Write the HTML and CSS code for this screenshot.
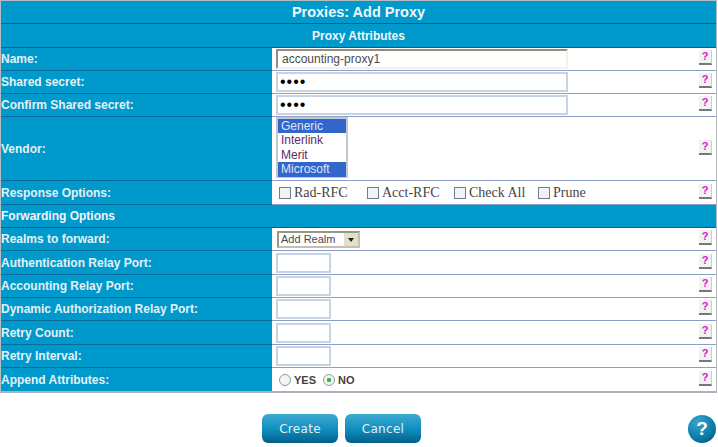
FILE: index.html
```html
<!DOCTYPE html>
<html lang="en">
<head>
  <meta charset="UTF-8">
  <title>Proxies: Add Proxy</title>
  <link rel="stylesheet" href="styles.css">
</head>
<body>
  <form class="proxy-form">
    <table class="proxy-table">
      <colgroup>
        <col class="col-label">
        <col>
        <col class="col-help">
      </colgroup>
      <tr><th colspan="3" class="title">Proxies: Add Proxy</th></tr>
      <tr class="tall"><th colspan="3" class="subtitle">Proxy Attributes</th></tr>
      <tr>
        <td class="label">Name:</td>
        <td class="field"><input type="text" class="text-wide text-focus" value="accounting-proxy1"></td>
        <td class="help"><span class="help-icon">?</span></td>
      </tr>
      <tr>
        <td class="label">Shared secret:</td>
        <td class="field"><input type="password" class="text-wide" value="abcd"></td>
        <td class="help"><span class="help-icon">?</span></td>
      </tr>
      <tr>
        <td class="label">Confirm Shared secret:</td>
        <td class="field"><input type="password" class="text-wide" value="abcd"></td>
        <td class="help"><span class="help-icon">?</span></td>
      </tr>
      <tr class="row-vendor">
        <td class="label">Vendor:</td>
        <td class="field">
          <div class="listbox">
            <div class="opt selected">Generic</div>
            <div class="opt">Interlink</div>
            <div class="opt">Merit</div>
            <div class="opt selected">Microsoft</div>
          </div>
        </td>
        <td class="help"><span class="help-icon">?</span></td>
      </tr>
      <tr class="tall">
        <td class="label">Response Options:</td>
        <td class="field">
          <div class="checks">
            <label class="check check-rad"><span class="box"></span>Rad-RFC</label>
            <label class="check check-acct"><span class="box"></span>Acct-RFC</label>
            <label class="check check-all"><span class="box"></span>Check All</label>
            <label class="check"><span class="box"></span>Prune</label>
          </div>
        </td>
        <td class="help"><span class="help-icon">?</span></td>
      </tr>
      <tr><th colspan="3" class="section">Forwarding Options</th></tr>
      <tr>
        <td class="label">Realms to forward:</td>
        <td class="field">
          <div class="dropdown"><span class="dropdown-text">Add Realm</span><span class="dropdown-btn"></span></div>
        </td>
        <td class="help"><span class="help-icon">?</span></td>
      </tr>
      <tr class="tall">
        <td class="label">Authentication Relay Port:</td>
        <td class="field"><input type="text" class="text-short"></td>
        <td class="help"><span class="help-icon">?</span></td>
      </tr>
      <tr>
        <td class="label">Accounting Relay Port:</td>
        <td class="field"><input type="text" class="text-short"></td>
        <td class="help"><span class="help-icon">?</span></td>
      </tr>
      <tr>
        <td class="label">Dynamic Authorization Relay Port:</td>
        <td class="field"><input type="text" class="text-short"></td>
        <td class="help"><span class="help-icon">?</span></td>
      </tr>
      <tr class="tall">
        <td class="label">Retry Count:</td>
        <td class="field"><input type="text" class="text-short"></td>
        <td class="help"><span class="help-icon">?</span></td>
      </tr>
      <tr>
        <td class="label">Retry Interval:</td>
        <td class="field"><input type="text" class="text-short"></td>
        <td class="help"><span class="help-icon">?</span></td>
      </tr>
      <tr>
        <td class="label last">Append Attributes:</td>
        <td class="field last">
          <div class="radios">
            <label class="radio"><span class="dot"></span>YES</label>
            <label class="radio"><span class="dot dot-on"></span>NO</label>
          </div>
        </td>
        <td class="help last"><span class="help-icon">?</span></td>
      </tr>
    </table>

    <div class="actions">
      <button type="button" class="btn">Create</button>
      <button type="button" class="btn">Cancel</button>
      <span class="page-help">?</span>
    </div>
  </form>
</body>
</html>
```
FILE: styles.css
```css
body {
  margin: 0;
  background: #fff;
  font-family: "Liberation Sans", Arial, sans-serif;
  overflow: hidden;
}

.proxy-form {
  width: 718px;
}

.proxy-table {
  width: 717px;
  border-collapse: separate;
  border-spacing: 0;
  table-layout: fixed;
  border: 1px solid #b4bcc2;
  border-bottom: 2px solid #a9b2bd;
  box-sizing: border-box;
}

.col-label {
  width: 271px;
}

.col-help {
  width: 60px;
}

tr {
  height: 23px;
}

tr.tall {
  height: 24px;
}

tr.row-vendor {
  height: 64px;
}

th, td {
  padding: 0;
  box-sizing: border-box;
}

th {
  background: #0099cc;
  color: #f0f6f8;
  font-weight: bold;
  border-bottom: 1px solid #0a5f80;
}

.title {
  font-size: 14.5px;
}

.subtitle {
  font-size: 12px;
}

.section {
  font-size: 12px;
  text-align: left;
}

.label {
  background: #0099cc;
  color: #e4f1f6;
  font-size: 12px;
  font-weight: bold;
  border-bottom: 1px solid #0a6c9c;
}

.field, .help {
  background: #fff;
  border-bottom: 1px solid #8b9fc6;
}

td.last {
  border-bottom: 0;
}

.field {
  padding-left: 4px;
}

.row-vendor .field {
  vertical-align: top;
}

.help {
  text-align: right;
  padding-right: 4px;
  line-height: 0;
}

input {
  display: block;
  box-sizing: border-box;
  height: 20px;
  padding: 0 3px 0 4px;
  border: 2px solid #c5d3e3;
  background: #fff;
  font-family: "Liberation Sans", Arial, sans-serif;
  font-size: 12px;
  color: #4a4a5a;
}

input[type="password"] {
  font-size: 16px;
  letter-spacing: 1px;
  color: #000;
  padding-left: 2px;
}

.text-wide {
  width: 292px;
}

.text-short {
  width: 55px;
}

.text-focus {
  border-color: #f4f1e8;
  border-top-color: #8e8e86;
  border-left-color: #8e8e86;
  background: #fffffb;
}

.listbox {
  width: 72px;
  height: 61px;
  box-sizing: border-box;
  border: 2px solid #c0c8d2;
  font-size: 12px;
  color: #5a2a6a;
}

.opt {
  height: 14.4px;
  line-height: 14.4px;
  padding-left: 3px;
}

.opt.selected {
  background: #3366cc;
  color: #dfe6f7;
}

.checks {
  display: flex;
  padding-left: 3px;
  font-family: "Liberation Serif", "Times New Roman", serif;
  font-size: 14px;
  color: #444;
}

.check {
  display: flex;
  align-items: center;
  gap: 3px;
}

.check-rad {
  width: 88px;
}

.check-acct {
  width: 87px;
}

.check-all {
  width: 84px;
}

.box {
  box-sizing: border-box;
  width: 12px;
  height: 12px;
  border: 1px solid #6d7f97;
  background: #f2f2f2;
}

.dropdown {
  display: flex;
  width: 83px;
  height: 17px;
  margin-left: 1px;
  box-sizing: border-box;
  border: 2px solid #c4c0ae;
  border-top-color: #9a9786;
  border-left-color: #9a9786;
  font-size: 11px;
  color: #4a4a4a;
}

.dropdown-text {
  flex: 1;
  line-height: 13px;
  padding-left: 2px;
}

.dropdown-btn {
  width: 14px;
  position: relative;
  background: #e4e0c8;
}

.dropdown-btn::after {
  content: "";
  position: absolute;
  left: 4px;
  top: 5px;
  border: 3px solid transparent;
  border-top: 4px solid #222;
  border-bottom: 0;
}

.radios {
  display: flex;
  gap: 7px;
  padding-left: 3px;
  font-size: 11px;
  font-weight: bold;
  color: #444;
}

.radio {
  display: flex;
  align-items: center;
  gap: 3px;
}

.dot {
  box-sizing: border-box;
  width: 12px;
  height: 12px;
  border: 1px solid #8a9aa8;
  border-radius: 50%;
  background: #f4f4f4;
}

.dot-on {
  background: radial-gradient(circle, #3cb54a 0 2px, #f4f4f4 2.5px);
}

.help-icon {
  display: inline-block;
  box-sizing: border-box;
  width: 13px;
  height: 15px;
  margin-bottom: 3px;
  line-height: 12px;
  text-align: center;
  font-size: 11px;
  font-weight: bold;
  color: #e014d8;
  background: #f2f2ee;
  border-bottom: 2px solid #777;
  border-right: 1px solid #ccc;
}

.actions {
  position: relative;
  display: flex;
  gap: 7px;
  padding: 21px 0 0 262px;
}

.btn {
  width: 76px;
  height: 29px;
  padding: 0;
  border: 0;
  border-radius: 6px;
  background: linear-gradient(#3fa9d2, #0d8dbd 55%, #045f87);
  color: #e6eff3;
  font-family: "DejaVu Sans", Verdana, sans-serif;
  font-size: 12px;
  letter-spacing: 0.3px;
}

.page-help {
  position: absolute;
  right: 2px;
  top: 22px;
  width: 28px;
  height: 28px;
  border-radius: 50%;
  background: radial-gradient(circle at 35% 25%, #35a4cf, #0a7aa6 60%, #054f72);
  color: #fff;
  font-size: 19px;
  font-weight: bold;
  line-height: 28px;
  text-align: center;
}
```
